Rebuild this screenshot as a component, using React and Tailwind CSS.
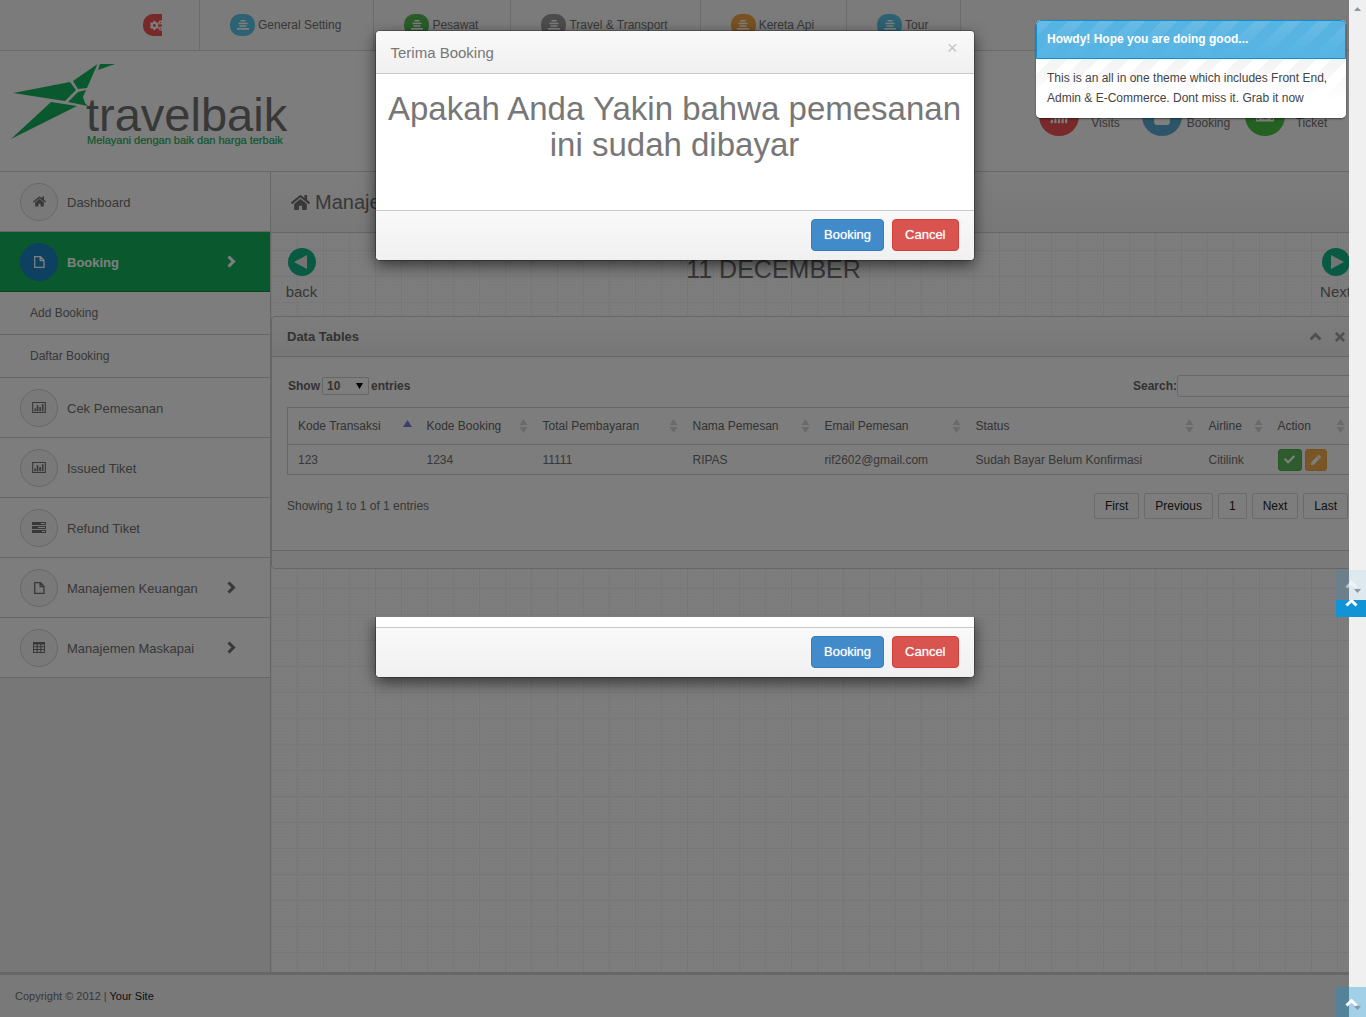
import {
  FaCheck,
  FaCogs,
  FaHome,
  FaMoneyBillAlt,
  FaPen,
  FaShoppingBag,
  FaSignal,
  FaTimes,
} from "react-icons/fa";

function ChevronRight() {
  return (
    <svg width="9" height="13" viewBox="0 0 9 13" fill="none" stroke="currentColor" strokeWidth="3" aria-hidden="true">
      <path d="M1.500 1.500L6.500 6.500L1.500 11.500" />
    </svg>
  );
}

function ChevronUp({ className }) {
  return (
    <svg width="13" height="9" viewBox="0 0 13 9" fill="none" stroke="currentColor" strokeWidth="3" className={className} aria-hidden="true">
      <path d="M1.500 7.500L6.500 2.500L11.500 7.500" />
    </svg>
  );
}

function FileIcon() {
  return (
    <svg width="11" height="12" viewBox="0 0 11 12" fill="none" stroke="currentColor" strokeWidth="1.3" aria-hidden="true">
      <path d="M.7.7H6.500L10 4.200V11.300H.7ZM6.200.7V4.500H10" />
    </svg>
  );
}

function TableIcon() {
  return (
    <svg width="12" height="11" viewBox="0 0 12 11" fill="currentColor" aria-hidden="true">
      <path
        d="M0 0h12v11H0zM1 2.400v1.800h2.600V2.400zM4.700 2.400v1.800h2.600V2.400zM8.400 2.400v1.800H11V2.400zM1 5.200V7h2.600V5.200zM4.700 5.200V7h2.600V5.200zM8.400 5.200V7H11V5.200zM1 8v2h2.600V8zM4.700 8v2h2.600V8zM8.400 8v2H11V8z"
        fillRule="evenodd"
      />
    </svg>
  );
}

function BarsIcon() {
  return (
    <svg width="12" height="10" viewBox="0 0 12 10" fill="#fff" aria-hidden="true">
      <rect x="3.500" y="0" width="5" height="1.5" />
      <rect x="1.500" y="2.7" width="9" height="1.5" />
      <rect x="2.500" y="5.3" width="7" height="1.5" />
      <rect x="0" y="8" width="12" height="1.7" />
    </svg>
  );
}

function ChartIcon() {
  return (
    <svg width="14" height="11" viewBox="0 0 15 12" fill="currentColor" aria-hidden="true">
      <path d="M0 0h15v12H0zM1.2 1.2v9.6h12.6V1.2z" fillRule="evenodd" />
      <path d="M2.5 7h1.8v3H2.5zM5 3.5h1.8V10H5zM7.8 5.5h1.8V10H7.8zM10.6 2.5h1.8V10h-1.8z" />
    </svg>
  );
}

function TasksIcon() {
  return (
    <svg width="14" height="11" viewBox="0 0 14 11" fill="currentColor" aria-hidden="true">
      <path d="M0 0h14v3H0zM9 1v1h4V1zM0 4h14v3H0zM6 5v1h7V5zM0 8h14v3H0zM10 9v1h3V9z" fillRule="evenodd" />
    </svg>
  );
}

function Logo() {
  return (
    <svg width="285" height="90" viewBox="0 0 285 90" role="img" aria-label="travelbaik">
      <g fill="#14b05a">
        <path d="M3 30L60 19L66 27L55 38Z" />
        <path d="M87.500 1L77 25L68 26L63 18Z" />
        <path d="M90 1H105L88 7Z" />
        <path d="M41 39L67 43L1 76Z" />
        <path d="M58 39L68 29L76 27L73 34L75 40L78 43Z" />
      </g>
      <text x="76" y="68" fontSize="47" fill="#707070" fontFamily="Liberation Sans, sans-serif">
        travelbaik
      </text>
      <text x="77" y="81" fontSize="11" fill="#14b05a" stroke="#14b05a" strokeWidth="0.2" fontFamily="Liberation Sans, sans-serif">
        Melayani dengan baik dan harga terbaik
      </text>
    </svg>
  );
}

const NAV = [
  { label: "General Setting", color: "bg-[#5bc5e6]" },
  { label: "Pesawat", color: "bg-[#54b854]" },
  { label: "Travel & Transport", color: "bg-[#999999]" },
  { label: "Kereta Api", color: "bg-[#f0a544]" },
  { label: "Tour", color: "bg-[#5bc5e6]" },
];

function TopNav() {
  return (
    <nav className="flex h-[51px] border-b border-[#d4d4d4] bg-[#f6f6f6] pl-[113px]">
      <a href="#settings" aria-label="Settings" className="flex w-[87px] border-r border-[#d8d8d8] pl-[30px] pt-[14px]">
        <span className="flex h-[22px] w-[19px] items-center overflow-hidden rounded-l-[10px] bg-[#f05252] pl-[7px] text-white">
          <FaCogs className="shrink-0" size={13} />
        </span>
      </a>
      {NAV.map((n) => (
        <a key={n.label} href="#nav" className="flex border-r border-[#d8d8d8] pl-[30px] pr-[32px] pt-[14px]">
          <span className={`mr-[3px] flex h-[22px] w-[25px] items-center justify-center rounded-[10px] ${n.color}`}>
            <BarsIcon />
          </span>
          <span className="leading-[22px]">{n.label}</span>
        </a>
      ))}
    </nav>
  );
}

const STATS = [
  { label: "Visits", color: "bg-[#f05252]", Icon: FaSignal },
  { label: "Booking", color: "bg-[#5aaad4]", Icon: FaShoppingBag },
  { label: "Ticket", color: "bg-[#46c142]", Icon: FaMoneyBillAlt },
];

function Header() {
  return (
    <header className="flex h-[121px] items-start justify-between border-b border-[#d0d0d0] bg-[#fafafa] pl-[10px] pr-[28px] pt-[12px]">
      <a href="#home">
        <Logo />
      </a>
      <ul className="flex gap-[10px] pt-[33px]">
        {STATS.map(({ label, color, Icon }) => (
          <li key={label} className="flex">
            <span className={`flex size-10 items-center justify-center rounded-full text-white ${color}`}>
              <Icon size={18} />
            </span>
            <span className="w-[53px] pt-[18px] text-center leading-[18px]">{label}</span>
          </li>
        ))}
      </ul>
    </header>
  );
}

const MENU = [
  { label: "Dashboard", icon: <FaHome size={13} /> },
  { label: "Booking", icon: <FileIcon />, active: true, arrow: true, children: ["Add Booking", "Daftar Booking"] },
  { label: "Cek Pemesanan", icon: <ChartIcon /> },
  { label: "Issued Tiket", icon: <ChartIcon /> },
  { label: "Refund Tiket", icon: <TasksIcon /> },
  { label: "Manajemen Keuangan", icon: <FileIcon />, arrow: true },
  { label: "Manajemen Maskapai", icon: <TableIcon />, arrow: true },
];

function Sidebar() {
  return (
    <aside className="w-[271px] shrink-0 border-r border-[#cccccc] bg-[#efefef]">
      <ul>
        {MENU.map((m) => (
          <li key={m.label}>
            <a
              href="#menu"
              className={`flex h-[60px] items-center border-b pl-[20px] pr-[34px] text-[13px] ${
                m.active ? "border-[#0c8a42] bg-[#14b05a] font-bold text-white" : "border-[#cccccc] bg-[#fafafa]"
              }`}
            >
              <span
                className={`mr-[9px] flex size-[38px] items-center justify-center rounded-full border ${
                  m.active ? "border-[#1a80c2] bg-[#1a80c2]" : "border-[#d0d0d0] bg-[#f3f3f3]"
                }`}
              >
                {m.icon}
              </span>
              <span className="flex-1 pt-[2px]">{m.label}</span>
              {m.arrow && <ChevronRight />}
            </a>
            {m.children && (
              <ul>
                {m.children.map((c) => (
                  <li key={c}>
                    <a href="#sub" className="flex h-[43px] items-center border-b border-[#cccccc] bg-[#fafafa] pl-[30px]">
                      {c}
                    </a>
                  </li>
                ))}
              </ul>
            )}
          </li>
        ))}
      </ul>
    </aside>
  );
}

function Pager({ label, flip }) {
  return (
    <a href="#day" className="flex w-[31px] flex-col items-center text-[15px] leading-[20px]">
      <svg width="28" height="28" viewBox="0 0 28 28" className={flip ? "mb-[6px] rotate-180" : "mb-[6px]"} aria-hidden="true">
        <circle cx="14" cy="14" r="14" fill="#12b484" />
        <path d="M6 14L19 7V21Z" fill="#e8e8e8" />
      </svg>
      {label}
    </a>
  );
}

function SortIcon({ asc }) {
  return asc ? (
    <svg width="9" height="14" viewBox="0 0 9 14" aria-hidden="true">
      <path d="M4.500 1L9 8H0Z" fill="#7a80d8" />
    </svg>
  ) : (
    <svg width="9" height="14" viewBox="0 0 9 14" fill="#d4d4d4" aria-hidden="true">
      <path d="M4.500 0L8.500 6H.5ZM4.500 14L.5 8H8.500Z" />
    </svg>
  );
}

const COLUMNS = [
  { label: "Kode Transaksi", width: "w-[129px]", asc: true },
  { label: "Kode Booking", width: "w-[116px]" },
  { label: "Total Pembayaran", width: "w-[150px]" },
  { label: "Nama Pemesan", width: "w-[132px]" },
  { label: "Email Pemesan", width: "w-[151px]" },
  { label: "Status", width: "w-auto" },
  { label: "Airline", width: "w-[69px]" },
  { label: "Action", width: "w-[83px]" },
];
const ROW = ["123", "1234", "11111", "RIPAS", "rif2602@gmail.com", "Sudah Bayar Belum Konfirmasi", "Citilink"];

function DataPanel() {
  return (
    <section className="rounded-[4px] border border-[#cccccc] bg-[#fafafa]">
      <div className="flex h-[40px] items-center justify-between rounded-t-[4px] border-b border-[#cccccc] bg-linear-to-b from-[#fafafa] to-[#efefef] pl-[15px] pr-[18px]">
        <h2 className="text-[13px] font-bold text-[#666]">Data Tables</h2>
        <div className="flex items-center gap-[11px] text-[#a0a0a0]">
          <button type="button" aria-label="Collapse">
            <ChevronUp />
          </button>
          <button type="button" aria-label="Close panel">
            <FaTimes size={14} />
          </button>
        </div>
      </div>
      <div className="h-[193px] pl-[15px] pr-[14px] pt-[18px]">
        <div className="flex h-[22px] items-center justify-between font-bold text-[#666]">
          <label className="flex items-center gap-[2px] pl-px">
            Show
            <span className="relative flex items-center">
              <select className="h-[18px] w-[47px] appearance-none rounded-[2px] border border-[#cccccc] bg-[#fdfdfd] pl-[4px] text-[12px] leading-[16px]">
                <option>10</option>
                <option>25</option>
                <option>50</option>
              </select>
              <svg width="7" height="6" viewBox="0 0 7 6" className="pointer-events-none absolute right-[6px]" aria-hidden="true">
                <path d="M0 0H7L3.500 6Z" fill="#000" />
              </svg>
            </span>
            entries
          </label>
          <label className="flex items-center">
            Search:
            <input type="text" className="h-[22px] w-[174px] rounded-[3px] border border-[#d0d0d0] bg-[#fdfdfd] px-[5px]" />
          </label>
        </div>
        <table className="mt-[10px] w-full table-fixed border-collapse border border-[#cccccc] text-left">
          <thead>
            <tr className="h-[37px] border-b border-[#cccccc]">
              {COLUMNS.map((c) => (
                <th key={c.label} scope="col" className={`p-0 pl-[10px] pr-[5px] font-normal text-[#666] ${c.width}`}>
                  <span className="flex items-center justify-between">
                    {c.label}
                    <SortIcon asc={c.asc} />
                  </span>
                </th>
              ))}
            </tr>
          </thead>
          <tbody>
            <tr className="h-[30px]">
              {ROW.map((v) => (
                <td key={v} className="pl-[10px]">
                  {v}
                </td>
              ))}
              <td className="pl-[10px]">
                <span className="flex gap-[3px] text-white">
                  <button type="button" aria-label="Terima" className="flex h-[22px] w-[24px] items-center justify-center rounded-[3px] border border-[#4cae4c] bg-[#5cb85c]">
                    <FaCheck size={11} />
                  </button>
                  <button type="button" aria-label="Edit" className="flex size-[22px] items-center justify-center rounded-[3px] border border-[#eea236] bg-[#f0ad4e]">
                    <FaPen size={10} />
                  </button>
                </span>
              </td>
            </tr>
          </tbody>
        </table>
        <div className="mt-[18px] flex h-[26px] items-center justify-between pr-[3px]">
          <p>Showing 1 to 1 of 1 entries</p>
          <div className="flex gap-[5px] text-[#222]">
            {["First", "Previous", "1", "Next", "Last"].map((p) => (
              <button key={p} type="button" className="h-[26px] rounded-[2px] border border-[#d4d4d4] bg-[#fafafa] px-[10px]">
                {p}
              </button>
            ))}
          </div>
        </div>
      </div>
      <div className="h-[18px] rounded-b-[4px] border-t border-[#cccccc] bg-[#f5f5f5]" />
    </section>
  );
}

function DialogFooter() {
  return (
    <div className="flex h-[50px] items-start justify-end gap-2 rounded-b-[4px] border-t border-[#c8c8c8] bg-linear-to-b from-[#f9f9f9] to-[#f0f0f0] pr-[15px] pt-[8px] text-[13px] text-white">
      <button type="button" className="h-[32px] rounded-[4px] border border-[#357ebd] bg-[#428bca] px-[12px] text-shadow-[0_0_1px_#ffffffb0]">
        Booking
      </button>
      <button type="button" className="h-[32px] rounded-[4px] border border-[#d43f3a] bg-[#d9534f] px-[12px] text-shadow-[0_0_1px_#ffffffb0]">
        Cancel
      </button>
    </div>
  );
}

function Dialog() {
  return (
    <div className="absolute inset-x-0 top-[31px] flex justify-center pr-[17px]">
      <div role="dialog" aria-labelledby="dialog-title" className="w-[598px] rounded-[4px] bg-white shadow-[0_5px_15px_rgba(0,0,0,0.6),0_0_0_1px_rgba(0,0,0,0.25)]">
        <div className="flex h-[43px] items-start justify-between rounded-t-[4px] border-b border-[#c8c8c8] bg-linear-to-b from-[#f9f9f9] to-[#f0f0f0] pl-[15px] pr-[16px]">
          <h2 id="dialog-title" className="pt-[2px] text-[15px] leading-[40px] text-[#777]">
            Terima Booking
          </h2>
          <button type="button" aria-label="Close" className="pt-[7px] text-[18px] leading-[20px] text-[#c4c4c4]">
            ×
          </button>
        </div>
        <p className="px-2 pt-[17px] pb-[47px] text-center text-[33px] leading-[36px] text-[#777]">
          Apakah Anda Yakin bahwa pemesanan ini sudah dibayar
        </p>
        <DialogFooter />
      </div>
    </div>
  );
}

function DialogTail() {
  return (
    <div className="absolute inset-x-0 top-[617px] flex h-[90px] items-start justify-center overflow-hidden pr-[17px]">
      <div className="w-[598px] rounded-b-[4px] bg-white pt-[10px] shadow-[0_5px_15px_rgba(0,0,0,0.6),0_0_0_1px_rgba(0,0,0,0.25)]">
        <DialogFooter />
      </div>
    </div>
  );
}

function Notice() {
  return (
    <div role="status" className="absolute top-[20px] right-[20px] w-[310px] overflow-hidden rounded-[5px] bg-white shadow-[0_1px_2px_rgba(0,0,0,0.5)]">
      <h3 className="h-[39px] rounded-t-[5px] border border-[#0f90cb] bg-[#56b3e2] bg-[linear-gradient(to_bottom,transparent,#56b3e2),repeating-linear-gradient(135deg,#ffffff1c_0_11px,transparent_11px_22px)] pl-[10px] font-bold leading-[36px] text-white">
        Howdy! Hope you are doing good...
      </h3>
      <p className="bg-[linear-gradient(to_bottom,transparent,#ffffff_70%),repeating-linear-gradient(135deg,#ffffff_0_11px,#f3f3f3_11px_22px)] pt-[9px] pb-[10px] pl-[11px] pr-[10px] leading-[20px] text-[#444]">
        This is an all in one theme which includes Front End, Admin &amp; E-Commerce. Dont miss it. Grab it now
      </p>
    </div>
  );
}

function ScrollArrow({ className, up }) {
  return (
    <svg width="7" height="4" viewBox="0 0 7 4" className={className} aria-hidden="true">
      <path d={up ? "M3.500 0L7 4H0Z" : "M0 0H7L3.500 4Z"} fill="#8a979e" />
    </svg>
  );
}

function ScrollTrack() {
  return (
    <div className="absolute inset-y-0 right-0 w-[17px] bg-[#f0f0f0]">
      <ScrollArrow up className="absolute top-[7px] left-[5px]" />
    </div>
  );
}

function ToTop() {
  return (
    <>
      <button type="button" aria-label="Back to top" className="absolute top-[587px] right-0 flex h-[30px] w-[30px] items-center justify-center bg-[#1094d6] text-white">
        <ChevronUp />
      </button>
      <div className="absolute top-[570px] right-0 flex h-[30px] w-[30px] bg-[#6c7f8a]">
        <div className="ml-auto w-[17px] bg-[#dde8ef]" />
        <ChevronUp className="absolute top-[10px] left-[9px] text-white/50" />
        <ScrollArrow className="absolute top-[19px] left-[18px]" />
      </div>
      <div className="absolute right-0 bottom-0 flex h-[30px] w-[30px] items-center justify-center bg-[#1094d6]/35 text-white">
        <ChevronUp />
        <ScrollArrow className="absolute top-[19px] left-[18px]" />
      </div>
    </>
  );
}

export default function App() {
  return (
    <div className="relative flex min-h-screen flex-col overflow-hidden bg-[#fafafa] font-['Liberation_Sans',Arial,sans-serif] text-[12px] leading-[18px] text-[#707070]">
      <TopNav />
      <Header />
      <div className="flex flex-1">
        <Sidebar />
        <main className="min-w-0 flex-1 bg-[#fbfbfb] bg-[linear-gradient(to_right,#eeeeee_1px,transparent_1px),linear-gradient(to_bottom,#eeeeee_1px,transparent_1px),radial-gradient(#f1f1f1_1px,transparent_1px)] bg-size-[26px_26px,26px_26px,3px_3px]">
          <h1 className="flex h-[61px] items-center gap-[5px] border-b border-[#d0d0d0] bg-linear-to-b from-[#fafafa] to-[#f0f0f0] pl-[20px] text-[20px]">
            <FaHome size={19} />
            Manajemen Booking
          </h1>
          <div className="flex h-[83px] items-start px-[15px] pt-[15px]">
            <Pager label="back" />
            <p className="flex-1 pr-[90px] pt-[7px] text-center text-[25px] leading-[28px]">11 DECEMBER</p>
            <Pager label="Next" flip />
          </div>
          <DataPanel />
        </main>
      </div>
      <footer className="h-[45px] border-t-[3px] border-[#cfcfcf] bg-[#f3f3f3] pl-[15px] text-[11px] leading-[42px]">
        Copyright © 2012 |{" "}
        <a href="#site" className="text-[#222]">
          Your Site
        </a>
      </footer>
      <div className="absolute inset-0 bg-black/50" />
      <Dialog />
      <DialogTail />
      <ScrollTrack />
      <Notice />
      <ToTop />
    </div>
  );
}
